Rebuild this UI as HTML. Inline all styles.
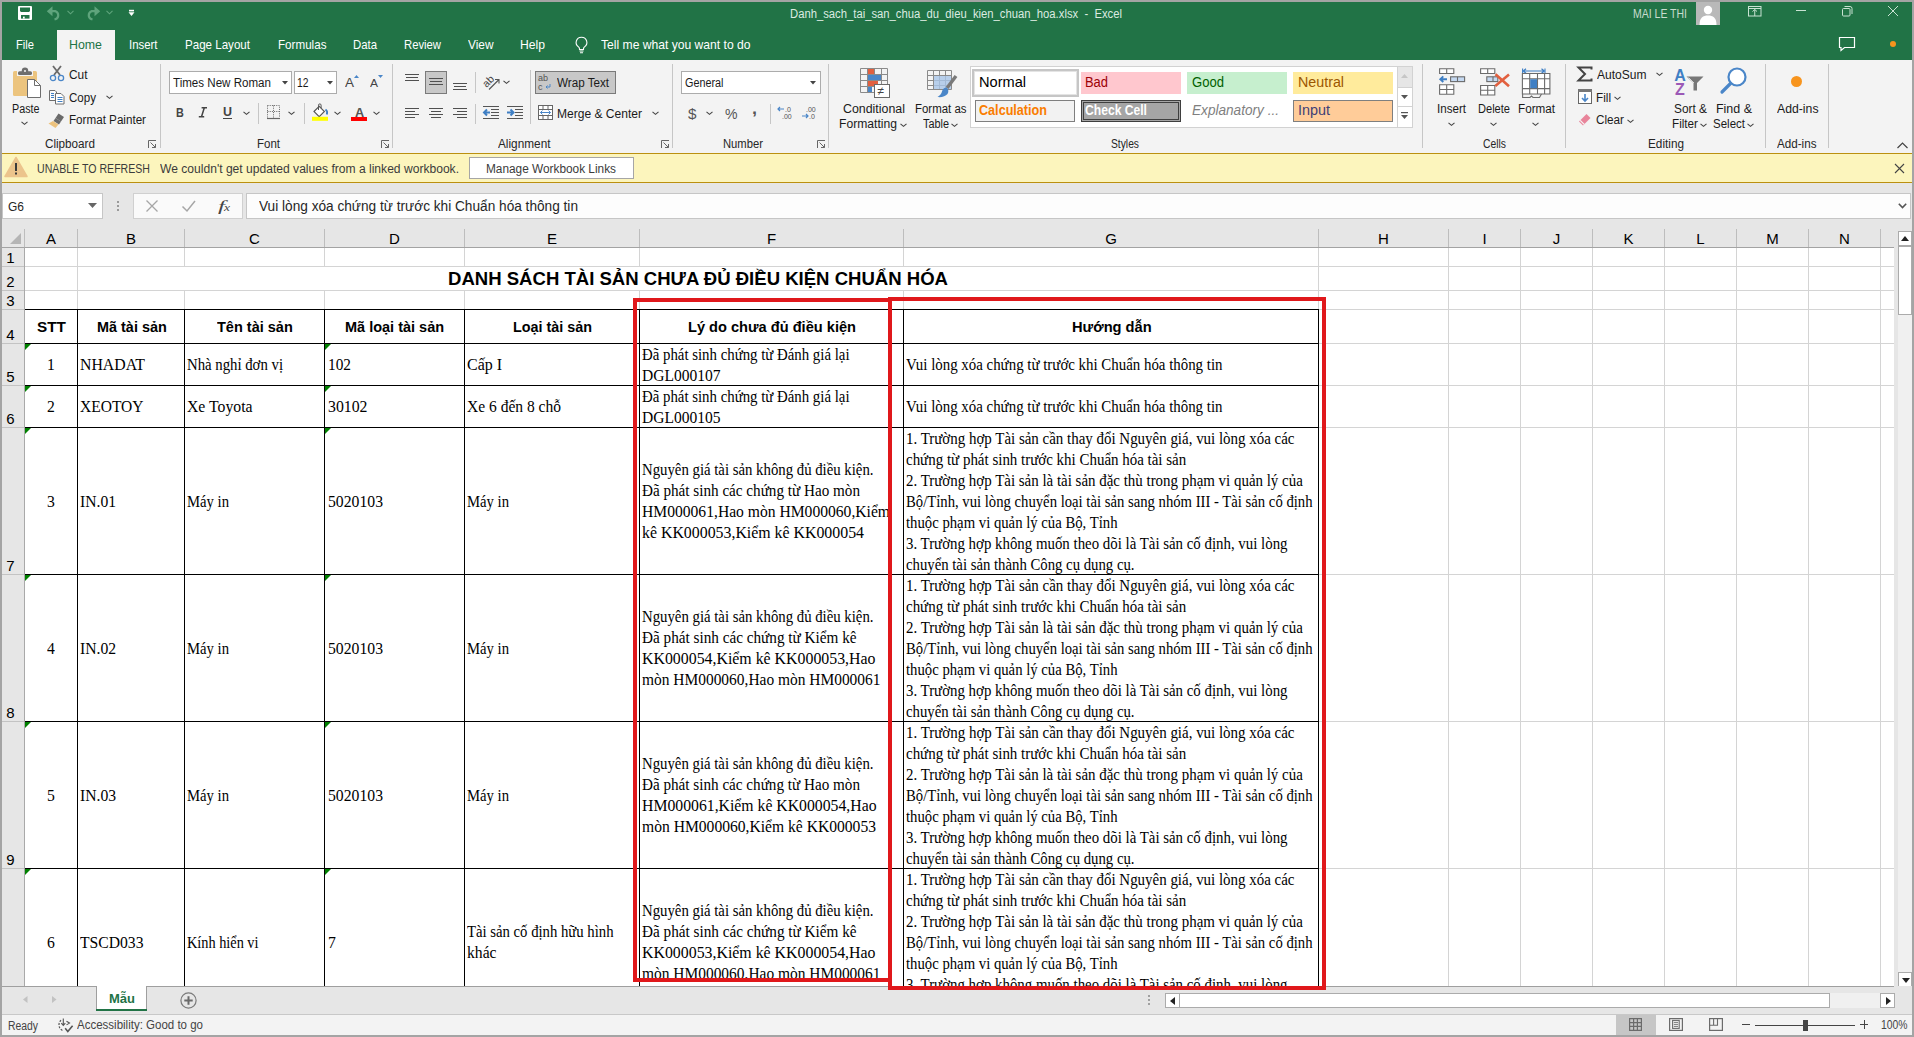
<!DOCTYPE html>
<html><head><meta charset="utf-8"><style>
html,body{margin:0;padding:0;}
body{width:1914px;height:1037px;overflow:hidden;position:relative;background:#a4a4a4;font-family:"Liberation Sans",sans-serif;}
.a{position:absolute;}
.t{white-space:pre;transform-origin:0 0;}
svg.a{overflow:visible;}

</style></head><body>
<div class="a" style="left:2px;top:2px;width:1910px;height:58px;background:#217346;"></div>
<div class="a" style="left:2px;top:60px;width:1910px;height:93px;background:#f3f3f3;"></div>
<div class="a" style="left:57px;top:30px;width:58px;height:30px;background:#f3f3f3;"></div>
<div class="a" style="left:2px;top:153px;width:1910px;height:30px;background:#fcf5bd;"></div>
<div class="a" style="left:2px;top:153px;width:1910px;height:1px;background:#bb9010;"></div>
<div class="a" style="left:2px;top:182px;width:1910px;height:1px;background:#bb9010;"></div>
<div class="a" style="left:2px;top:183px;width:1910px;height:64px;background:#e6e6e6;"></div>
<div class="a" style="left:2px;top:247px;width:1892px;height:739px;background:#ffffff;"></div>
<div class="a" style="left:2px;top:247px;width:22px;height:739px;background:#e6e6e6;"></div>
<div class="a" style="left:1894px;top:229px;width:18px;height:757px;background:#e6e6e6;"></div>
<div class="a" style="left:2px;top:986px;width:1910px;height:28px;background:#e6e6e6;"></div>
<div class="a" style="left:2px;top:1014px;width:1910px;height:21px;background:#f3f3f3;"></div>
<svg class="a" style="left:18px;top:6px;" width="14" height="14" viewBox="0 0 14 14"><rect x="0" y="0" width="14" height="14" rx="1" fill="#fff"/><path d="M2 1.5h10v3.5l-1 1H3l-1-1z" fill="#217346"/><rect x="3" y="9" width="8.5" height="3.6" fill="#217346"/><rect x="5" y="10.6" width="1.7" height="2" fill="#fff"/></svg>
<svg class="a" style="left:46px;top:5px;" width="16" height="15" viewBox="0 0 16 15"><path d="M2 6.2H9.5A4.3 4.3 0 0 1 9.5 14.2H8.5" fill="none" stroke="#5fa47c" stroke-width="2.2"/><path d="M0.8 6.2L6.5 1.2V11.2z" fill="#5fa47c"/></svg>
<svg class="a" style="left:67px;top:10px;" width="7" height="5" viewBox="0 0 7 5"><path d="M0.5 0.8L3.5 3.8 6.5 0.8" fill="none" stroke="#5fa47c" stroke-width="1.1"/></svg>
<svg class="a" style="left:85px;top:5px;" width="16" height="15" viewBox="0 0 16 15"><path d="M14 6.2H6.5A4.3 4.3 0 0 0 6.5 14.2H7.5" fill="none" stroke="#5fa47c" stroke-width="2.2"/><path d="M15.2 6.2L9.5 1.2V11.2z" fill="#5fa47c"/></svg>
<svg class="a" style="left:106px;top:10px;" width="7" height="5" viewBox="0 0 7 5"><path d="M0.5 0.8L3.5 3.8 6.5 0.8" fill="none" stroke="#5fa47c" stroke-width="1.1"/></svg>
<svg class="a" style="left:128px;top:9px;" width="7" height="8" viewBox="0 0 7 8"><rect x="1" y="0.8" width="5" height="1.6" fill="#fff"/><path d="M0.5 3.2h6l-3 3.8z" fill="#fff"/></svg>
<div class="a t" style="left:790.00px;top:8px;font:400 12px/1 'Liberation Sans';color:#dcebe1;transform:scaleX(0.9389);">Danh_sach_tai_san_chua_du_dieu_kien_chuan_hoa.xlsx  -  Excel</div>
<div class="a t" style="left:1633.00px;top:8px;font:400 12px/1 'Liberation Sans';color:#c9ddd0;transform:scaleX(0.8738);">MAI LE THI</div>
<div class="a" style="left:1696px;top:2px;width:24px;height:23px;background:#b9b9b9;"></div>
<svg class="a" style="left:1696px;top:2px;" width="24" height="23" viewBox="0 0 24 23"><circle cx="12" cy="8" r="4.2" fill="#fff"/><path d="M3.5 23 C3.5 15.5 7 13.5 12 13.5 C17 13.5 20.5 15.5 20.5 23 Z" fill="#fff"/></svg>
<svg class="a" style="left:1747px;top:5px;" width="15" height="12" viewBox="0 0 15 12"><rect x="1.5" y="1.5" width="12.5" height="9.5" fill="none" stroke="#c9e3d3" stroke-width="1"/><path d="M1.5 3.5h12.5M7.75 4.5V11M5.5 6.5l2.25-2 2.25 2" fill="none" stroke="#c9e3d3" stroke-width="1"/></svg>
<div class="a" style="left:1796px;top:10px;width:10px;height:1px;background:#c9e3d3;"></div>
<svg class="a" style="left:1841px;top:5px;" width="12" height="12" viewBox="0 0 12 12"><rect x="1.5" y="3.5" width="7.5" height="7.5" rx="1" fill="none" stroke="#c9e3d3"/><path d="M3.5 1.5h5.5a2 2 0 0 1 2 2V9" fill="none" stroke="#c9e3d3"/></svg>
<svg class="a" style="left:1887px;top:5px;" width="12" height="12" viewBox="0 0 12 12"><path d="M1 1l10 10M11 1L1 11" stroke="#c9e3d3" stroke-width="1"/></svg>
<div class="a t" style="left:16.00px;top:38px;font:400 13px/1 'Liberation Sans';color:#ffffff;transform:scaleX(0.8591);">File</div>
<div class="a t" style="left:69.00px;top:38px;font:400 13px/1 'Liberation Sans';color:#217346;transform:scaleX(0.9514);">Home</div>
<div class="a t" style="left:129.00px;top:38px;font:400 13px/1 'Liberation Sans';color:#ffffff;transform:scaleX(0.8765);">Insert</div>
<div class="a t" style="left:185.00px;top:38px;font:400 13px/1 'Liberation Sans';color:#ffffff;transform:scaleX(0.8902);">Page Layout</div>
<div class="a t" style="left:277.50px;top:38px;font:400 13px/1 'Liberation Sans';color:#ffffff;transform:scaleX(0.8950);">Formulas</div>
<div class="a t" style="left:353.00px;top:38px;font:400 13px/1 'Liberation Sans';color:#ffffff;transform:scaleX(0.8737);">Data</div>
<div class="a t" style="left:404.00px;top:38px;font:400 13px/1 'Liberation Sans';color:#ffffff;transform:scaleX(0.8680);">Review</div>
<div class="a t" style="left:467.50px;top:38px;font:400 13px/1 'Liberation Sans';color:#ffffff;transform:scaleX(0.9122);">View</div>
<div class="a t" style="left:520.00px;top:38px;font:400 13px/1 'Liberation Sans';color:#ffffff;transform:scaleX(0.9346);">Help</div>
<svg class="a" style="left:574px;top:36px;" width="15" height="18" viewBox="0 0 15 18"><path d="M7.5 1.2a5.3 5.3 0 0 0-3 9.7c.6.5 1 1.2 1 2V13.5h4v-.6c0-.8.4-1.5 1-2a5.3 5.3 0 0 0-3-9.7z" fill="none" stroke="#fff" stroke-width="1.1"/><path d="M5.5 15h4M6 16.8h3" stroke="#fff" stroke-width="1.1"/></svg>
<div class="a t" style="left:601.00px;top:38px;font:400 13px/1 'Liberation Sans';color:#ffffff;transform:scaleX(0.9319);">Tell me what you want to do</div>
<svg class="a" style="left:1838px;top:36px;" width="18" height="16" viewBox="0 0 18 16"><path d="M1.5 1.5h15v10h-10l-3.5 3v-3h-1.5z" fill="none" stroke="#fff" stroke-width="1.2"/></svg>
<div class="a" style="left:1889.5px;top:40.5px;width:6px;height:6px;border-radius:50%;background:#f7941d"></div>
<div class="a" style="left:160px;top:64px;width:1px;height:84px;background:#c6c6c6;"></div>
<div class="a" style="left:392px;top:64px;width:1px;height:84px;background:#c6c6c6;"></div>
<div class="a" style="left:672px;top:64px;width:1px;height:84px;background:#c6c6c6;"></div>
<div class="a" style="left:828px;top:64px;width:1px;height:84px;background:#c6c6c6;"></div>
<div class="a" style="left:1422px;top:64px;width:1px;height:84px;background:#c6c6c6;"></div>
<div class="a" style="left:1565px;top:64px;width:1px;height:84px;background:#c6c6c6;"></div>
<div class="a" style="left:1765px;top:64px;width:1px;height:84px;background:#c6c6c6;"></div>
<div class="a" style="left:1828px;top:64px;width:1px;height:84px;background:#c6c6c6;"></div>
<svg class="a" style="left:12px;top:67px;" width="31" height="32" viewBox="0 0 31 32"><rect x="1" y="4" width="24" height="25" rx="1.5" fill="#ecc47e"/><path d="M5 2.2h16v6.8H5z" fill="#f3f3f3"/><rect x="6" y="4.2" width="14" height="3.8" rx="1.6" fill="#6e6e6e"/><path d="M9.8 5V3.6a3.2 3.2 0 0 1 6.4 0V5z" fill="#6e6e6e"/><circle cx="13" cy="3.9" r="1" fill="#f3f3f3"/><path d="M15.5 12.5h7l6 6V30.5h-13z" fill="#fff" stroke="#6e6e6e" stroke-width="1"/><path d="M22.5 12.5v6h6" fill="none" stroke="#6e6e6e" stroke-width="1"/></svg>
<div class="a t" style="left:11.50px;top:103px;font:400 12px/1 'Liberation Sans';color:#1a1a1a;transform:scaleX(0.8961);">Paste</div>
<svg class="a" style="left:21px;top:121px;" width="7" height="5" viewBox="0 0 7 5"><path d="M0.5 0.8L3.5 3.3L6.5 0.8" fill="none" stroke="#444" stroke-width="1.1"/></svg>
<svg class="a" style="left:49px;top:65px;" width="17" height="17" viewBox="0 0 17 17"><path d="M4 1L11 10M12 1L5 10" stroke="#6a6a6a" stroke-width="1.8"/><circle cx="4" cy="13" r="2.6" fill="none" stroke="#4a86c8" stroke-width="1.3"/><circle cx="12" cy="13" r="2.6" fill="none" stroke="#4a86c8" stroke-width="1.3"/></svg>
<div class="a t" style="left:68.50px;top:69px;font:400 12px/1 'Liberation Sans';color:#1a1a1a;transform:scaleX(0.9900);">Cut</div>
<svg class="a" style="left:48px;top:89px;" width="18" height="16" viewBox="0 0 18 16"><path d="M1.5 1.5h5.5l1.5 1.5v3M1.5 1.5v10h5.5" fill="#fff" stroke="#6e6e6e" stroke-width="1"/><path d="M3 4.5h3M3 6.5h3M3 8.5h3" stroke="#3f7fc4" stroke-width="1"/><path d="M7.5 4.5h5.5l3 3v7.5h-8.5z" fill="#fff" stroke="#6e6e6e" stroke-width="1"/><path d="M9.5 8.5h5M9.5 10.5h5M9.5 12.5h5" stroke="#3f7fc4" stroke-width="1"/></svg>
<div class="a t" style="left:68.50px;top:92px;font:400 12px/1 'Liberation Sans';color:#1a1a1a;transform:scaleX(0.9637);">Copy</div>
<svg class="a" style="left:106px;top:95px;" width="7" height="5" viewBox="0 0 7 5"><path d="M0.5 0.8L3.5 3.3L6.5 0.8" fill="none" stroke="#444" stroke-width="1.1"/></svg>
<svg class="a" style="left:48px;top:112px;" width="18" height="16" viewBox="0 0 18 16"><path d="M10.5 1.5l5.5 3.5-3 4.5-5.5-3.5z" fill="#6a6a6a"/><path d="M7.5 6l5.5 3.5-2 3-5.5-3.5z" fill="#6a6a6a"/><path d="M5 9l5.5 3.5-3 3.5-7-4.5z" fill="#ecc27d"/></svg>
<div class="a t" style="left:68.50px;top:114px;font:400 12px/1 'Liberation Sans';color:#1a1a1a;transform:scaleX(0.9703);">Format Painter</div>
<div class="a t" style="left:44.50px;top:138px;font:400 12px/1 'Liberation Sans';color:#262626;transform:scaleX(0.9732);">Clipboard</div>
<svg class="a" style="left:148px;top:140px;" width="9" height="9" viewBox="0 0 9 9"><path d="M0.5 8V0.5H8" fill="none" stroke="#666" stroke-width="1"/><path d="M2.5 2.5L7.5 7.5M7.5 4v3.5H4" fill="none" stroke="#666" stroke-width="1"/></svg>
<div class="a" style="left:169px;top:71px;width:123px;height:23px;background:#fff;box-sizing:border-box;border:1px solid #acacac;"></div>
<div class="a t" style="left:172.50px;top:77px;font:400 12px/1 'Liberation Sans';color:#1a1a1a;transform:scaleX(0.9648);">Times New Roman</div>
<svg class="a" style="left:282px;top:81px;" width="6" height="4" viewBox="0 0 6 4"><path d="M0 0h6l-3 3.5z" fill="#444"/></svg>
<div class="a" style="left:294px;top:71px;width:43px;height:23px;background:#fff;box-sizing:border-box;border:1px solid #acacac;"></div>
<div class="a t" style="left:297.00px;top:77px;font:400 12px/1 'Liberation Sans';color:#1a1a1a;transform:scaleX(0.8608);">12</div>
<svg class="a" style="left:327px;top:81px;" width="6" height="4" viewBox="0 0 6 4"><path d="M0 0h6l-3 3.5z" fill="#444"/></svg>
<div class="a t" style="left:345.00px;top:76px;font:400 13px/1 'Liberation Sans';color:#444;transform:scaleX(1.0378);">A</div>
<svg class="a" style="left:354px;top:75px;" width="5" height="3" viewBox="0 0 5 3"><path d="M0 3L2.5 0 5 3z" fill="#4a86c8"/></svg>
<div class="a t" style="left:370.00px;top:78px;font:400 11px/1 'Liberation Sans';color:#444;transform:scaleX(1.0894);">A</div>
<svg class="a" style="left:378px;top:75px;" width="5" height="3" viewBox="0 0 5 3"><path d="M0 0h5L2.5 3z" fill="#4a86c8"/></svg>
<div class="a t" style="left:175.50px;top:107px;font:700 12px/1 'Liberation Sans';color:#444;transform:scaleX(0.8995);">B</div>
<svg class="a" style="left:198px;top:107px;" width="10" height="11" viewBox="0 0 10 11"><path d="M3.6 0.8h5.4M0.8 9.8h5.4M6.3 0.8L3.5 9.8" fill="none" stroke="#444" stroke-width="1.5"/></svg>
<div class="a t" style="left:222.70px;top:106px;font:700 12px/1 'Liberation Sans';color:#444;transform:scaleX(1.0378);">U</div>
<div class="a" style="left:222.5px;top:118px;width:9.5px;height:1px;background:#444;"></div>
<svg class="a" style="left:242.5px;top:111px;" width="7" height="5" viewBox="0 0 7 5"><path d="M0.5 0.8L3.5 3.3L6.5 0.8" fill="none" stroke="#444" stroke-width="1.1"/></svg>
<div class="a" style="left:258px;top:103px;width:1px;height:21px;background:#c6c6c6;"></div>
<svg class="a" style="left:266px;top:104px;" width="16" height="16" viewBox="0 0 16 16"><path d="M1.5 1.5h12v12M1.5 1.5v12M7.5 1.5v12M1.5 7.5h12" fill="none" stroke="#666" stroke-width="1" stroke-dasharray="1 1.2"/><path d="M1 14.5h13" stroke="#666" stroke-width="1.2"/></svg>
<svg class="a" style="left:288px;top:111px;" width="7" height="5" viewBox="0 0 7 5"><path d="M0.5 0.8L3.5 3.3L6.5 0.8" fill="none" stroke="#444" stroke-width="1.1"/></svg>
<div class="a" style="left:304px;top:103px;width:1px;height:21px;background:#c6c6c6;"></div>
<svg class="a" style="left:311px;top:104px;" width="18" height="17" viewBox="0 0 18 17"><path d="M3 7.5L8.2 2.3 13.4 7.5 8.2 12.7z" fill="#fff" stroke="#555" stroke-width="1.1"/><path d="M7.5 6V1.2a1.3 1.3 0 0 1 2.6 0V4" fill="none" stroke="#555" stroke-width="1"/><path d="M14.5 5.5c1.5 1 2 3 1.3 5" fill="none" stroke="#3f7fc4" stroke-width="1.8"/><rect x="1" y="12.8" width="16" height="4" fill="#ffff00"/></svg>
<svg class="a" style="left:334px;top:111px;" width="7" height="5" viewBox="0 0 7 5"><path d="M0.5 0.8L3.5 3.3L6.5 0.8" fill="none" stroke="#444" stroke-width="1.1"/></svg>
<div class="a t" style="left:354.80px;top:106px;font:700 13px/1 'Liberation Sans';color:#555;transform:scaleX(0.9797);">A</div>
<div class="a" style="left:351px;top:117px;width:16px;height:4px;background:#ff0000;"></div>
<svg class="a" style="left:373px;top:111px;" width="7" height="5" viewBox="0 0 7 5"><path d="M0.5 0.8L3.5 3.3L6.5 0.8" fill="none" stroke="#444" stroke-width="1.1"/></svg>
<div class="a t" style="left:256.50px;top:138px;font:400 12px/1 'Liberation Sans';color:#262626;transform:scaleX(0.9577);">Font</div>
<svg class="a" style="left:381px;top:140px;" width="9" height="9" viewBox="0 0 9 9"><path d="M0.5 8V0.5H8" fill="none" stroke="#666" stroke-width="1"/><path d="M2.5 2.5L7.5 7.5M7.5 4v3.5H4" fill="none" stroke="#666" stroke-width="1"/></svg>
<div class="a" style="left:405px;top:74px;width:14px;height:1px;background:#505050;"></div>
<div class="a" style="left:406px;top:77px;width:12px;height:1px;background:#505050;"></div>
<div class="a" style="left:405px;top:80px;width:14px;height:1px;background:#505050;"></div>
<div class="a" style="left:425px;top:71px;width:22px;height:23px;background:#c8c8c8;box-sizing:border-box;border:1px solid #7a7a7a;"></div>
<div class="a" style="left:429px;top:78px;width:14px;height:1px;background:#505050;"></div>
<div class="a" style="left:430px;top:81px;width:12px;height:1px;background:#505050;"></div>
<div class="a" style="left:429px;top:84px;width:14px;height:1px;background:#505050;"></div>
<div class="a" style="left:453px;top:83px;width:14px;height:1px;background:#505050;"></div>
<div class="a" style="left:454px;top:86px;width:12px;height:1px;background:#505050;"></div>
<div class="a" style="left:453px;top:89px;width:14px;height:1px;background:#505050;"></div>
<div class="a" style="left:475px;top:72px;width:1px;height:21px;background:#c6c6c6;"></div>
<svg class="a" style="left:482px;top:74px;" width="18" height="16" viewBox="0 0 18 16"><text x="0" y="0" font-size="10.5" font-family="Liberation Sans" fill="#444" transform="translate(4.5 14) rotate(-45)">ab</text><path d="M7 15.5L16.5 6M13 5.5h4v4" fill="none" stroke="#555" stroke-width="1.1"/></svg>
<svg class="a" style="left:503px;top:80px;" width="7" height="5" viewBox="0 0 7 5"><path d="M0.5 0.8L3.5 3.3L6.5 0.8" fill="none" stroke="#444" stroke-width="1.1"/></svg>
<div class="a" style="left:530px;top:70px;width:1px;height:54px;background:#c6c6c6;"></div>
<div class="a" style="left:535px;top:71px;width:81px;height:23px;background:#c8c8c8;box-sizing:border-box;border:1px solid #7a7a7a;"></div>
<svg class="a" style="left:538px;top:73px;" width="16" height="19" viewBox="0 0 16 19"><text x="0" y="8" font-size="9" font-family="Liberation Sans" fill="#555">ab</text><text x="0" y="17" font-size="9" font-family="Liberation Sans" fill="#555">c</text><path d="M12 11v3h-4M9.5 12.5L8 14l1.5 1.5" fill="none" stroke="#4a86c8" stroke-width="1"/></svg>
<div class="a t" style="left:557.00px;top:77px;font:400 12px/1 'Liberation Sans';color:#1a1a1a;transform:scaleX(0.9705);">Wrap Text</div>
<div class="a" style="left:405px;top:108px;width:14px;height:1px;background:#505050;"></div>
<div class="a" style="left:429px;top:108px;width:14px;height:1px;background:#505050;"></div>
<div class="a" style="left:453px;top:108px;width:14px;height:1px;background:#505050;"></div>
<div class="a" style="left:405px;top:111px;width:10px;height:1px;background:#505050;"></div>
<div class="a" style="left:431px;top:111px;width:10px;height:1px;background:#505050;"></div>
<div class="a" style="left:457px;top:111px;width:10px;height:1px;background:#505050;"></div>
<div class="a" style="left:405px;top:114px;width:14px;height:1px;background:#505050;"></div>
<div class="a" style="left:429px;top:114px;width:14px;height:1px;background:#505050;"></div>
<div class="a" style="left:453px;top:114px;width:14px;height:1px;background:#505050;"></div>
<div class="a" style="left:405px;top:117px;width:10px;height:1px;background:#505050;"></div>
<div class="a" style="left:431px;top:117px;width:10px;height:1px;background:#505050;"></div>
<div class="a" style="left:457px;top:117px;width:10px;height:1px;background:#505050;"></div>
<div class="a" style="left:475px;top:104px;width:1px;height:20px;background:#c6c6c6;"></div>
<svg class="a" style="left:483px;top:105px;" width="17" height="14" viewBox="0 0 17 14"><path d="M0 1.5h16M8 4.5h8M8 7.5h8M8 10.5h8M0 13.5h16" stroke="#555" stroke-width="1"/><path d="M1 7.5h6M4 4.5L1 7.5 4 10.5" fill="none" stroke="#3f7fc4" stroke-width="2"/></svg>
<svg class="a" style="left:507px;top:105px;" width="17" height="14" viewBox="0 0 17 14"><path d="M0 1.5h16M8 4.5h8M8 7.5h8M8 10.5h8M0 13.5h16" stroke="#555" stroke-width="1"/><path d="M0 7.5h6M3.5 4.5L6.5 7.5 3.5 10.5" fill="none" stroke="#3f7fc4" stroke-width="2"/></svg>
<svg class="a" style="left:537px;top:104px;" width="17" height="17" viewBox="0 0 17 17"><rect x="1.5" y="1.5" width="14" height="14" fill="#fff" stroke="#666"/><path d="M1.5 5.5h14M1.5 11.5h14M6 1.5v4M11 1.5v4M6 11.5v4M11 11.5v4" stroke="#666"/><path d="M3.5 8.5h10M5.5 6.5l-2 2 2 2M11.5 6.5l2 2-2 2" fill="none" stroke="#4a86c8" stroke-width="1"/></svg>
<div class="a t" style="left:557.00px;top:108px;font:400 12px/1 'Liberation Sans';color:#1a1a1a;transform:scaleX(1.0035);">Merge &amp; Center</div>
<svg class="a" style="left:652px;top:111px;" width="7" height="5" viewBox="0 0 7 5"><path d="M0.5 0.8L3.5 3.3L6.5 0.8" fill="none" stroke="#444" stroke-width="1.1"/></svg>
<div class="a t" style="left:498.00px;top:138px;font:400 12px/1 'Liberation Sans';color:#262626;transform:scaleX(0.9836);">Alignment</div>
<svg class="a" style="left:661px;top:140px;" width="9" height="9" viewBox="0 0 9 9"><path d="M0.5 8V0.5H8" fill="none" stroke="#666" stroke-width="1"/><path d="M2.5 2.5L7.5 7.5M7.5 4v3.5H4" fill="none" stroke="#666" stroke-width="1"/></svg>
<div class="a" style="left:681px;top:71px;width:140px;height:23px;background:#fff;box-sizing:border-box;border:1px solid #acacac;"></div>
<div class="a t" style="left:685.00px;top:77px;font:400 12px/1 'Liberation Sans';color:#1a1a1a;transform:scaleX(0.9016);">General</div>
<svg class="a" style="left:810px;top:81px;" width="6" height="4" viewBox="0 0 6 4"><path d="M0 0h6l-3 3.5z" fill="#444"/></svg>
<div class="a t" style="left:688.00px;top:106px;font:400 15px/1 'Liberation Sans';color:#555;transform:scaleX(1.0187);">$</div>
<svg class="a" style="left:706px;top:111px;" width="7" height="5" viewBox="0 0 7 5"><path d="M0.5 0.8L3.5 3.3L6.5 0.8" fill="none" stroke="#444" stroke-width="1.1"/></svg>
<div class="a t" style="left:725.00px;top:107px;font:400 14px/1 'Liberation Sans';color:#555;transform:scaleX(1.0038);">%</div>
<div class="a t" style="left:752.00px;top:101px;font:700 16px/1 'Liberation Sans';color:#555;transform:scaleX(1.1228);">,</div>
<div class="a" style="left:770px;top:104px;width:1px;height:20px;background:#c6c6c6;"></div>
<svg class="a" style="left:777px;top:105px;" width="17" height="15" viewBox="0 0 17 15"><path d="M1 4h6M3 2L1 4l2 2" fill="none" stroke="#4a86c8" stroke-width="1.2"/><text x="8" y="6.5" font-size="7" font-family="Liberation Sans" fill="#555">.0</text><text x="5" y="14" font-size="7" font-family="Liberation Sans" fill="#555">.00</text></svg>
<svg class="a" style="left:801px;top:105px;" width="17" height="15" viewBox="0 0 17 15"><text x="5" y="6.5" font-size="7" font-family="Liberation Sans" fill="#555">.00</text><path d="M1 11h6M5 9l2 2-2 2" fill="none" stroke="#4a86c8" stroke-width="1.2"/><text x="8" y="14" font-size="7" font-family="Liberation Sans" fill="#555">.0</text></svg>
<div class="a t" style="left:722.50px;top:138px;font:400 12px/1 'Liberation Sans';color:#262626;transform:scaleX(0.9370);">Number</div>
<svg class="a" style="left:817px;top:140px;" width="9" height="9" viewBox="0 0 9 9"><path d="M0.5 8V0.5H8" fill="none" stroke="#666" stroke-width="1"/><path d="M2.5 2.5L7.5 7.5M7.5 4v3.5H4" fill="none" stroke="#666" stroke-width="1"/></svg>
<svg class="a" style="left:859px;top:67px;" width="33" height="32" viewBox="0 0 33 32"><path d="M1.5 1.5h27v24h-27zM1.5 7.5h27M1.5 13.5h27M1.5 19.5h27M8.5 1.5v24M15.5 1.5v24M22.5 1.5v24" fill="none" stroke="#8a8a8a" stroke-width="1"/><rect x="9" y="2" width="6" height="5" fill="#e2603f"/><rect x="9" y="8" width="13" height="5" fill="#4a86c8"/><rect x="9" y="14" width="10" height="5" fill="#e2603f"/><rect x="9" y="20" width="4" height="5" fill="#4a86c8"/><rect x="15.5" y="17.5" width="15" height="13" fill="#fff" stroke="#6a6a6a"/><text x="18.5" y="28" font-size="12" font-family="Liberation Sans" fill="#444">≠</text></svg>
<div class="a t" style="left:843.00px;top:103px;font:400 12px/1 'Liberation Sans';color:#1a1a1a;transform:scaleX(1.0325);">Conditional</div>
<div class="a t" style="left:839.00px;top:118px;font:400 12px/1 'Liberation Sans';color:#1a1a1a;transform:scaleX(1.0112);">Formatting</div>
<svg class="a" style="left:900px;top:123px;" width="7" height="5" viewBox="0 0 7 5"><path d="M0.5 0.8L3.5 3.3L6.5 0.8" fill="none" stroke="#444" stroke-width="1.1"/></svg>
<svg class="a" style="left:926px;top:69px;" width="32" height="30" viewBox="0 0 32 30"><path d="M1.5 1.5h24v19h-24zM1.5 6.5h24M1.5 11.5h24M1.5 16.5h24M7.5 1.5v19M13.5 1.5v19M19.5 1.5v19" fill="none" stroke="#8a8a8a"/><rect x="8" y="7" width="17" height="13" fill="#a9c6e8" opacity="0.8"/><path d="M30 7L21 19" stroke="#7a7a7a" stroke-width="3.5"/><path d="M20.5 18.5c-2 0-4 1.5-4.5 4-0.5 2-2 4-4.5 5.5 4 0.5 8-0.5 10-3 1.5-2 1-5-1-6.5z" fill="#4a86c8"/></svg>
<div class="a t" style="left:914.50px;top:103px;font:400 12px/1 'Liberation Sans';color:#1a1a1a;transform:scaleX(0.9534);">Format as</div>
<div class="a t" style="left:922.50px;top:118px;font:400 12px/1 'Liberation Sans';color:#1a1a1a;transform:scaleX(0.9063);">Table</div>
<svg class="a" style="left:951px;top:123px;" width="7" height="5" viewBox="0 0 7 5"><path d="M0.5 0.8L3.5 3.3L6.5 0.8" fill="none" stroke="#444" stroke-width="1.1"/></svg>
<div class="a" style="left:970px;top:66px;width:443px;height:62px;background:#fff;box-sizing:border-box;border:1px solid #d2d2d2;"></div>
<div class="a" style="left:972px;top:69px;width:107px;height:28px;background:#fff;box-sizing:border-box;border:2px solid #c6c6c6;"></div>
<div class="a" style="left:974px;top:71px;width:103px;height:24px;background:#fff;box-sizing:border-box;border:1px solid #e4e4e4;"></div>
<div class="a t" style="left:979.00px;top:74px;font:400 15px/1 'Liberation Sans';color:#000;transform:scaleX(0.9722);">Normal</div>
<div class="a" style="left:1081px;top:72px;width:100px;height:22px;background:#ffc7ce;"></div>
<div class="a t" style="left:1085.00px;top:75px;font:400 14px/1 'Liberation Sans';color:#9c0006;transform:scaleX(0.9229);">Bad</div>
<div class="a" style="left:1187px;top:72px;width:100px;height:22px;background:#c6efce;"></div>
<div class="a t" style="left:1191.50px;top:75px;font:400 14px/1 'Liberation Sans';color:#006100;transform:scaleX(0.9343);">Good</div>
<div class="a" style="left:1293px;top:72px;width:100px;height:22px;background:#ffeb9c;"></div>
<div class="a t" style="left:1297.50px;top:75px;font:400 14px/1 'Liberation Sans';color:#9c5700;transform:scaleX(1.0190);">Neutral</div>
<div class="a" style="left:975px;top:100px;width:100px;height:22px;background:#f2f2f2;box-sizing:border-box;border:1px solid #7f7f7f;"></div>
<div class="a t" style="left:979.00px;top:103px;font:700 14px/1 'Liberation Sans';color:#fa7d00;transform:scaleX(0.9010);">Calculation</div>
<div class="a" style="left:1081px;top:100px;width:100px;height:22px;background:#a5a5a5;box-sizing:border-box;border:1px solid #3f3f3f;"></div>
<div class="a" style="left:1083px;top:102px;width:96px;height:18px;box-sizing:border-box;border:1px solid #3f3f3f;"></div>
<div class="a t" style="left:1085.00px;top:103px;font:700 14px/1 'Liberation Sans';color:#ffffff;transform:scaleX(0.8660);">Check Cell</div>
<div class="a t" style="left:1191.50px;top:103px;font:italic 400 14px/1 'Liberation Sans';color:#7f7f7f;transform:scaleX(0.9721);">Explanatory ...</div>
<div class="a" style="left:1293px;top:100px;width:100px;height:22px;background:#ffcc99;box-sizing:border-box;border:1px solid #7f7f7f;"></div>
<div class="a t" style="left:1297.50px;top:103px;font:400 14px/1 'Liberation Sans';color:#3f3f76;transform:scaleX(1.0276);">Input</div>
<div class="a" style="left:1397px;top:66px;width:16px;height:62px;background:#fff;box-sizing:border-box;border:1px solid #d2d2d2;"></div>
<div class="a" style="left:1398px;top:67px;width:14px;height:20px;background:#e6e6e6;"></div>
<svg class="a" style="left:1401px;top:74px;" width="7" height="4" viewBox="0 0 7 4"><path d="M0 4L3.5 0 7 4z" fill="#c6c6c6"/></svg>
<div class="a" style="left:1397px;top:87px;width:16px;height:1px;background:#d2d2d2;"></div>
<div class="a" style="left:1397px;top:106px;width:16px;height:1px;background:#d2d2d2;"></div>
<svg class="a" style="left:1401px;top:95px;" width="7" height="4" viewBox="0 0 7 4"><path d="M0 0h7L3.5 4z" fill="#555"/></svg>
<svg class="a" style="left:1401px;top:112px;" width="7" height="8" viewBox="0 0 7 8"><rect x="0" y="0" width="7" height="1.2" fill="#555"/><path d="M0 3h7L3.5 7z" fill="#555"/></svg>
<div class="a t" style="left:1111.00px;top:138px;font:400 12px/1 'Liberation Sans';color:#262626;transform:scaleX(0.8566);">Styles</div>
<svg class="a" style="left:1430px;top:62px;" width="40" height="38" viewBox="0 0 40 38"><path d="M9.6 6.7h14.2v4.8H9.6zM16.7 6.7v4.8" fill="#fff" stroke="#6b6b6b" stroke-width="1.1"/><rect x="20.6" y="14.8" width="14" height="4.8" fill="#c5d9f1" stroke="#6b6b6b" stroke-width="1.1"/><path d="M27.5 14.8v4.8" stroke="#6b6b6b" stroke-width="1.1"/><path d="M10.5 17.2h6.5M13.3 14.4L10.3 17.2 13.3 20" fill="none" stroke="#3f7fc4" stroke-width="1.9"/><path d="M9.6 22.8h14.2v9.5H9.6zM9.6 27.5h14.2M16.7 22.8v9.5" fill="#fff" stroke="#6b6b6b" stroke-width="1.1"/></svg>
<div class="a t" style="left:1437.00px;top:103px;font:400 12px/1 'Liberation Sans';color:#1a1a1a;transform:scaleX(0.9662);">Insert</div>
<svg class="a" style="left:1448px;top:122px;" width="7" height="5" viewBox="0 0 7 5"><path d="M0.5 0.8L3.5 3.3L6.5 0.8" fill="none" stroke="#444" stroke-width="1.1"/></svg>
<svg class="a" style="left:1470px;top:62px;" width="42" height="38" viewBox="0 0 42 38"><path d="M10.6 6.7h14.2v4.8H10.6zM17.7 6.7v4.8" fill="#fff" stroke="#6b6b6b" stroke-width="1.1"/><rect x="16.8" y="14.8" width="11" height="4.8" fill="#c5d9f1" stroke="#6b6b6b" stroke-width="1.1"/><path d="M23 14.8v4.8" stroke="#6b6b6b" stroke-width="1.1"/><path d="M10.6 23.5h14.2v9.5H10.6zM10.6 28.2h14.2M17.7 23.5v9.5" fill="#fff" stroke="#6b6b6b" stroke-width="1.1"/><path d="M25.5 12.2L39 24.3M39 12.5L25.3 24" stroke="#e2603f" stroke-width="2.6"/></svg>
<div class="a t" style="left:1477.50px;top:103px;font:400 12px/1 'Liberation Sans';color:#1a1a1a;transform:scaleX(0.9225);">Delete</div>
<svg class="a" style="left:1490px;top:122px;" width="7" height="5" viewBox="0 0 7 5"><path d="M0.5 0.8L3.5 3.3L6.5 0.8" fill="none" stroke="#444" stroke-width="1.1"/></svg>
<svg class="a" style="left:1520px;top:62px;" width="34" height="38" viewBox="0 0 34 38"><path d="M2.6 6.5v5M25 6.5v5" stroke="#3f7fc4" stroke-width="1.1"/><path d="M3 9h21.5M6 6.8L3.2 9 6 11.2M21.5 6.8L24.3 9 21.5 11.2" fill="none" stroke="#3f7fc4" stroke-width="1.2"/><path d="M2.4 11.5h27.5v20.5H2.4zM2.4 16.7h27.5M2.4 26.6h27.5M9.7 11.5v20.5M17.5 11.5v20.5M24.6 11.5v20.5" fill="#fff" stroke="#6b6b6b" stroke-width="1.1"/><rect x="10.2" y="17.2" width="6.8" height="9" fill="#3f7fc4"/><path d="M2.6 32v3.5h7.4l1.5-1.5 1.5 1.5h6.5l2-3.5" fill="none" stroke="#6b6b6b" stroke-width="1.1"/></svg>
<div class="a t" style="left:1517.50px;top:103px;font:400 12px/1 'Liberation Sans';color:#1a1a1a;transform:scaleX(0.9733);">Format</div>
<svg class="a" style="left:1532px;top:122px;" width="7" height="5" viewBox="0 0 7 5"><path d="M0.5 0.8L3.5 3.3L6.5 0.8" fill="none" stroke="#444" stroke-width="1.1"/></svg>
<div class="a t" style="left:1482.50px;top:138px;font:400 12px/1 'Liberation Sans';color:#262626;transform:scaleX(0.8623);">Cells</div>
<svg class="a" style="left:1577px;top:66px;" width="16" height="16" viewBox="0 0 16 16"><path d="M14.5 3.5V1.5H1.5l6.5 6.5-6.5 6.5h13v-2" fill="none" stroke="#444" stroke-width="2"/></svg>
<div class="a t" style="left:1596.50px;top:69px;font:400 12px/1 'Liberation Sans';color:#1a1a1a;transform:scaleX(1.0028);">AutoSum</div>
<svg class="a" style="left:1656px;top:72px;" width="7" height="5" viewBox="0 0 7 5"><path d="M0.5 0.8L3.5 3.3L6.5 0.8" fill="none" stroke="#444" stroke-width="1.1"/></svg>
<svg class="a" style="left:1577px;top:88px;" width="16" height="17" viewBox="0 0 16 17"><rect x="1.5" y="1.5" width="13" height="14" fill="#fff" stroke="#666"/><rect x="1" y="1" width="14" height="3" fill="#777"/><path d="M8 6v7M5 10l3 3 3-3" fill="none" stroke="#4a86c8" stroke-width="1.6"/></svg>
<div class="a t" style="left:1596.00px;top:92px;font:400 12px/1 'Liberation Sans';color:#1a1a1a;transform:scaleX(0.9786);">Fill</div>
<svg class="a" style="left:1614px;top:96px;" width="7" height="5" viewBox="0 0 7 5"><path d="M0.5 0.8L3.5 3.3L6.5 0.8" fill="none" stroke="#444" stroke-width="1.1"/></svg>
<svg class="a" style="left:1577px;top:111px;" width="15" height="15" viewBox="0 0 15 15"><path d="M2 10.5L9.5 3 13.5 7 6 14.5z" fill="#e8849a"/><path d="M3.2 9.3L7.2 13.3" stroke="#f6f6f6" stroke-width="1.2"/></svg>
<div class="a t" style="left:1596.00px;top:114px;font:400 12px/1 'Liberation Sans';color:#1a1a1a;transform:scaleX(0.9760);">Clear</div>
<svg class="a" style="left:1627px;top:119px;" width="7" height="5" viewBox="0 0 7 5"><path d="M0.5 0.8L3.5 3.3L6.5 0.8" fill="none" stroke="#444" stroke-width="1.1"/></svg>
<svg class="a" style="left:1674px;top:67px;" width="31" height="30" viewBox="0 0 31 30"><text x="0.3" y="14" font-size="16" font-weight="700" font-family="Liberation Sans" fill="#3f7fc4">A</text><text x="1" y="28" font-size="16" font-weight="700" font-family="Liberation Sans" fill="#9b59b6">Z</text><path d="M12.5 9.5h17l-6.5 6.5v7.5h-3.5v-7.5z" fill="#777"/><path d="M14.5 10.5l5.5 5.5" stroke="#f3f3f3" stroke-width="0.8"/></svg>
<div class="a t" style="left:1673.50px;top:103px;font:400 12px/1 'Liberation Sans';color:#1a1a1a;transform:scaleX(0.9892);">Sort &amp;</div>
<div class="a t" style="left:1671.50px;top:118px;font:400 12px/1 'Liberation Sans';color:#1a1a1a;transform:scaleX(0.9748);">Filter</div>
<svg class="a" style="left:1700px;top:123px;" width="7" height="5" viewBox="0 0 7 5"><path d="M0.5 0.8L3.5 3.3L6.5 0.8" fill="none" stroke="#444" stroke-width="1.1"/></svg>
<svg class="a" style="left:1719px;top:66px;" width="30" height="30" viewBox="0 0 30 30"><circle cx="18" cy="11" r="8.5" fill="#fff" stroke="#4a86c8" stroke-width="2.2"/><path d="M11.5 17.5L3 26" stroke="#4a86c8" stroke-width="3.2" stroke-linecap="round"/></svg>
<div class="a t" style="left:1716.00px;top:103px;font:400 12px/1 'Liberation Sans';color:#1a1a1a;transform:scaleX(1.0378);">Find &amp;</div>
<div class="a t" style="left:1713.00px;top:118px;font:400 12px/1 'Liberation Sans';color:#1a1a1a;transform:scaleX(0.9593);">Select</div>
<svg class="a" style="left:1747px;top:123px;" width="7" height="5" viewBox="0 0 7 5"><path d="M0.5 0.8L3.5 3.3L6.5 0.8" fill="none" stroke="#444" stroke-width="1.1"/></svg>
<div class="a t" style="left:1647.50px;top:138px;font:400 12px/1 'Liberation Sans';color:#262626;transform:scaleX(0.9808);">Editing</div>
<div class="a" style="left:1790.5px;top:75.5px;width:11px;height:11px;border-radius:50%;background:#f7941d"></div>
<div class="a t" style="left:1776.50px;top:103px;font:400 12px/1 'Liberation Sans';color:#1a1a1a;transform:scaleX(1.0200);">Add-ins</div>
<div class="a t" style="left:1777.00px;top:138px;font:400 12px/1 'Liberation Sans';color:#262626;transform:scaleX(0.9708);">Add-ins</div>
<svg class="a" style="left:1897px;top:142px;" width="11" height="7" viewBox="0 0 11 7"><path d="M0.5 6L5.5 1l5 5" fill="none" stroke="#444" stroke-width="1.2"/></svg>
<svg class="a" style="left:4px;top:156px;" width="24" height="22" viewBox="0 0 24 22"><path d="M12 1.5L23 20.5H1z" fill="#ecc48c" stroke="#ecc48c" stroke-width="1.5" stroke-linejoin="round"/><rect x="11" y="7" width="2" height="8" fill="#3a3a3a"/><rect x="11" y="16.5" width="2" height="2" fill="#3a3a3a"/></svg>
<div class="a t" style="left:36.50px;top:163px;font:400 12px/1 'Liberation Sans';color:#3b3b3b;transform:scaleX(0.8810);">UNABLE TO REFRESH</div>
<div class="a t" style="left:160.00px;top:163px;font:400 12px/1 'Liberation Sans';color:#3b3b3b;transform:scaleX(1.0071);">We couldn&#x27;t get updated values from a linked workbook.</div>
<div class="a" style="left:469px;top:157px;width:165px;height:22px;background:#ffffff;box-sizing:border-box;border:1px solid #a6a6a6;"></div>
<div class="a t" style="left:485.50px;top:163px;font:400 12px/1 'Liberation Sans';color:#3b3b3b;transform:scaleX(0.9859);">Manage Workbook Links</div>
<svg class="a" style="left:1894px;top:163px;" width="11" height="11" viewBox="0 0 11 11"><path d="M1 1l9 9M10 1L1 10" stroke="#444" stroke-width="1.1"/></svg>
<div class="a" style="left:2px;top:193px;width:101px;height:26px;background:#ffffff;box-sizing:border-box;border:1px solid #c6c6c6;"></div>
<div class="a t" style="left:8.00px;top:200px;font:400 13px/1 'Liberation Sans';color:#262626;transform:scaleX(0.9225);">G6</div>
<svg class="a" style="left:88px;top:203px;" width="9" height="5" viewBox="0 0 9 5"><path d="M0 0h9L4.5 5z" fill="#666"/></svg>
<div class="a" style="left:117px;top:201px;width:2px;height:2px;background:#9a9a9a;"></div>
<div class="a" style="left:117px;top:205px;width:2px;height:2px;background:#9a9a9a;"></div>
<div class="a" style="left:117px;top:209px;width:2px;height:2px;background:#9a9a9a;"></div>
<div class="a" style="left:133px;top:193px;width:110px;height:26px;background:#fafafa;box-sizing:border-box;border:1px solid #d0d0d0;"></div>
<svg class="a" style="left:145px;top:199px;" width="14" height="14" viewBox="0 0 14 14"><path d="M1.5 1.5l11 11M12.5 1.5l-11 11" stroke="#a6a6a6" stroke-width="1.3"/></svg>
<svg class="a" style="left:181px;top:199px;" width="15" height="14" viewBox="0 0 15 14"><path d="M1.5 7.5l4.5 4.5 8-10" fill="none" stroke="#a6a6a6" stroke-width="1.5"/></svg>
<div class="a t" style="left:218.00px;top:200px;font:italic 400 14px/1 'Liberation Serif';color:#444;transform:scaleX(1.7992);">f</div>
<div class="a t" style="left:224.00px;top:202px;font:italic 400 11px/1 'Liberation Serif';color:#444;transform:scaleX(1.2268);">x</div>
<div class="a" style="left:246px;top:193px;width:1665px;height:26px;background:#fdfdfd;box-sizing:border-box;border:1px solid #c6c6c6;"></div>
<div class="a t" style="left:258.50px;top:199px;font:400 14px/1 'Liberation Sans';color:#262626;transform:scaleX(0.9753);">Vui lòng xóa chứng từ trước khi Chuẩn hóa thông tin</div>
<svg class="a" style="left:1898px;top:203px;" width="9" height="6" viewBox="0 0 9 6"><path d="M0.8 0.8L4.5 4.5 8.2 0.8" fill="none" stroke="#555" stroke-width="1.6"/></svg>
<svg class="a" style="left:10px;top:233px;" width="12" height="12" viewBox="0 0 12 12"><path d="M11 0V11H0z" fill="#b5b5b5"/></svg>
<div class="a" style="left:24px;top:229px;width:1px;height:18px;background:#bdbdbd;"></div>
<div class="a" style="left:77px;top:229px;width:1px;height:18px;background:#bdbdbd;"></div>
<div class="a" style="left:184px;top:229px;width:1px;height:18px;background:#bdbdbd;"></div>
<div class="a" style="left:324px;top:229px;width:1px;height:18px;background:#bdbdbd;"></div>
<div class="a" style="left:464px;top:229px;width:1px;height:18px;background:#bdbdbd;"></div>
<div class="a" style="left:639px;top:229px;width:1px;height:18px;background:#bdbdbd;"></div>
<div class="a" style="left:903px;top:229px;width:1px;height:18px;background:#bdbdbd;"></div>
<div class="a" style="left:1318px;top:229px;width:1px;height:18px;background:#bdbdbd;"></div>
<div class="a" style="left:1448px;top:229px;width:1px;height:18px;background:#bdbdbd;"></div>
<div class="a" style="left:1520px;top:229px;width:1px;height:18px;background:#bdbdbd;"></div>
<div class="a" style="left:1592px;top:229px;width:1px;height:18px;background:#bdbdbd;"></div>
<div class="a" style="left:1664px;top:229px;width:1px;height:18px;background:#bdbdbd;"></div>
<div class="a" style="left:1736px;top:229px;width:1px;height:18px;background:#bdbdbd;"></div>
<div class="a" style="left:1808px;top:229px;width:1px;height:18px;background:#bdbdbd;"></div>
<div class="a" style="left:1880px;top:229px;width:1px;height:18px;background:#bdbdbd;"></div>
<div class="a t" style="left:45.99px;top:231px;font:400 15px/1 'Liberation Sans';color:#000000;">A</div>
<div class="a t" style="left:125.99px;top:231px;font:400 15px/1 'Liberation Sans';color:#000000;">B</div>
<div class="a t" style="left:249.08px;top:231px;font:400 15px/1 'Liberation Sans';color:#000000;">C</div>
<div class="a t" style="left:389.08px;top:231px;font:400 15px/1 'Liberation Sans';color:#000000;">D</div>
<div class="a t" style="left:546.99px;top:231px;font:400 15px/1 'Liberation Sans';color:#000000;">E</div>
<div class="a t" style="left:766.91px;top:231px;font:400 15px/1 'Liberation Sans';color:#000000;">F</div>
<div class="a t" style="left:1105.16px;top:231px;font:400 15px/1 'Liberation Sans';color:#000000;">G</div>
<div class="a t" style="left:1378.08px;top:231px;font:400 15px/1 'Liberation Sans';color:#000000;">H</div>
<div class="a t" style="left:1482.41px;top:231px;font:400 15px/1 'Liberation Sans';color:#000000;">I</div>
<div class="a t" style="left:1552.75px;top:231px;font:400 15px/1 'Liberation Sans';color:#000000;">J</div>
<div class="a t" style="left:1623.49px;top:231px;font:400 15px/1 'Liberation Sans';color:#000000;">K</div>
<div class="a t" style="left:1696.33px;top:231px;font:400 15px/1 'Liberation Sans';color:#000000;">L</div>
<div class="a t" style="left:1766.25px;top:231px;font:400 15px/1 'Liberation Sans';color:#000000;">M</div>
<div class="a t" style="left:1839.08px;top:231px;font:400 15px/1 'Liberation Sans';color:#000000;">N</div>
<div class="a" style="left:2px;top:247px;width:1892px;height:1px;background:#a3a3a3;"></div>
<div class="a" style="left:77px;top:248px;width:1px;height:738px;background:#d4d4d4;"></div>
<div class="a" style="left:184px;top:248px;width:1px;height:738px;background:#d4d4d4;"></div>
<div class="a" style="left:324px;top:248px;width:1px;height:738px;background:#d4d4d4;"></div>
<div class="a" style="left:464px;top:248px;width:1px;height:738px;background:#d4d4d4;"></div>
<div class="a" style="left:639px;top:248px;width:1px;height:738px;background:#d4d4d4;"></div>
<div class="a" style="left:903px;top:248px;width:1px;height:738px;background:#d4d4d4;"></div>
<div class="a" style="left:1318px;top:248px;width:1px;height:738px;background:#d4d4d4;"></div>
<div class="a" style="left:1448px;top:248px;width:1px;height:738px;background:#d4d4d4;"></div>
<div class="a" style="left:1520px;top:248px;width:1px;height:738px;background:#d4d4d4;"></div>
<div class="a" style="left:1592px;top:248px;width:1px;height:738px;background:#d4d4d4;"></div>
<div class="a" style="left:1664px;top:248px;width:1px;height:738px;background:#d4d4d4;"></div>
<div class="a" style="left:1736px;top:248px;width:1px;height:738px;background:#d4d4d4;"></div>
<div class="a" style="left:1808px;top:248px;width:1px;height:738px;background:#d4d4d4;"></div>
<div class="a" style="left:1880px;top:248px;width:1px;height:738px;background:#d4d4d4;"></div>
<div class="a" style="left:1894px;top:247px;width:1px;height:739px;background:#bdbdbd;"></div>
<div class="a" style="left:25px;top:266px;width:1869px;height:1px;background:#d4d4d4;"></div>
<div class="a" style="left:25px;top:290px;width:1869px;height:1px;background:#d4d4d4;"></div>
<div class="a" style="left:25px;top:309px;width:1869px;height:1px;background:#d4d4d4;"></div>
<div class="a" style="left:25px;top:343px;width:1869px;height:1px;background:#d4d4d4;"></div>
<div class="a" style="left:25px;top:385px;width:1869px;height:1px;background:#d4d4d4;"></div>
<div class="a" style="left:25px;top:427px;width:1869px;height:1px;background:#d4d4d4;"></div>
<div class="a" style="left:25px;top:574px;width:1869px;height:1px;background:#d4d4d4;"></div>
<div class="a" style="left:25px;top:721px;width:1869px;height:1px;background:#d4d4d4;"></div>
<div class="a" style="left:25px;top:868px;width:1869px;height:1px;background:#d4d4d4;"></div>
<div class="a" style="left:78px;top:267px;width:1240px;height:23px;background:#ffffff;"></div>
<div class="a" style="left:2px;top:266px;width:22px;height:1px;background:#c3c3c3;"></div>
<div class="a" style="left:2px;top:290px;width:22px;height:1px;background:#c3c3c3;"></div>
<div class="a" style="left:2px;top:309px;width:22px;height:1px;background:#c3c3c3;"></div>
<div class="a" style="left:2px;top:343px;width:22px;height:1px;background:#c3c3c3;"></div>
<div class="a" style="left:2px;top:385px;width:22px;height:1px;background:#c3c3c3;"></div>
<div class="a" style="left:2px;top:427px;width:22px;height:1px;background:#c3c3c3;"></div>
<div class="a" style="left:2px;top:574px;width:22px;height:1px;background:#c3c3c3;"></div>
<div class="a" style="left:2px;top:721px;width:22px;height:1px;background:#c3c3c3;"></div>
<div class="a" style="left:2px;top:868px;width:22px;height:1px;background:#c3c3c3;"></div>
<div class="a" style="left:24px;top:247px;width:1px;height:739px;background:#a9a9a9;"></div>
<div class="a t" style="left:6.33px;top:250px;font:400 15px/1 'Liberation Sans';color:#000000;">1</div>
<div class="a t" style="left:6.33px;top:274px;font:400 15px/1 'Liberation Sans';color:#000000;">2</div>
<div class="a t" style="left:6.33px;top:293px;font:400 15px/1 'Liberation Sans';color:#000000;">3</div>
<div class="a t" style="left:6.33px;top:327px;font:400 15px/1 'Liberation Sans';color:#000000;">4</div>
<div class="a t" style="left:6.33px;top:369px;font:400 15px/1 'Liberation Sans';color:#000000;">5</div>
<div class="a t" style="left:6.33px;top:411px;font:400 15px/1 'Liberation Sans';color:#000000;">6</div>
<div class="a t" style="left:6.33px;top:558px;font:400 15px/1 'Liberation Sans';color:#000000;">7</div>
<div class="a t" style="left:6.33px;top:705px;font:400 15px/1 'Liberation Sans';color:#000000;">8</div>
<div class="a t" style="left:6.33px;top:852px;font:400 15px/1 'Liberation Sans';color:#000000;">9</div>
<div class="a" style="left:25px;top:309px;width:1294px;height:1px;background:#000000;"></div>
<div class="a" style="left:25px;top:343px;width:1294px;height:1px;background:#000000;"></div>
<div class="a" style="left:25px;top:385px;width:1294px;height:1px;background:#000000;"></div>
<div class="a" style="left:25px;top:427px;width:1294px;height:1px;background:#000000;"></div>
<div class="a" style="left:25px;top:574px;width:1294px;height:1px;background:#000000;"></div>
<div class="a" style="left:25px;top:721px;width:1294px;height:1px;background:#000000;"></div>
<div class="a" style="left:25px;top:868px;width:1294px;height:1px;background:#000000;"></div>
<div class="a" style="left:77px;top:309px;width:1px;height:677px;background:#000000;"></div>
<div class="a" style="left:184px;top:309px;width:1px;height:677px;background:#000000;"></div>
<div class="a" style="left:324px;top:309px;width:1px;height:677px;background:#000000;"></div>
<div class="a" style="left:464px;top:309px;width:1px;height:677px;background:#000000;"></div>
<div class="a" style="left:639px;top:309px;width:1px;height:677px;background:#000000;"></div>
<div class="a" style="left:903px;top:309px;width:1px;height:677px;background:#000000;"></div>
<div class="a" style="left:1318px;top:309px;width:1px;height:677px;background:#000000;"></div>
<svg class="a" style="left:25px;top:344px;" width="7" height="7" viewBox="0 0 7 7"><path d="M0 0H6L0 6z" fill="#008000"/></svg>
<svg class="a" style="left:325px;top:344px;" width="7" height="7" viewBox="0 0 7 7"><path d="M0 0H6L0 6z" fill="#008000"/></svg>
<svg class="a" style="left:25px;top:386px;" width="7" height="7" viewBox="0 0 7 7"><path d="M0 0H6L0 6z" fill="#008000"/></svg>
<svg class="a" style="left:325px;top:386px;" width="7" height="7" viewBox="0 0 7 7"><path d="M0 0H6L0 6z" fill="#008000"/></svg>
<svg class="a" style="left:25px;top:428px;" width="7" height="7" viewBox="0 0 7 7"><path d="M0 0H6L0 6z" fill="#008000"/></svg>
<svg class="a" style="left:325px;top:428px;" width="7" height="7" viewBox="0 0 7 7"><path d="M0 0H6L0 6z" fill="#008000"/></svg>
<svg class="a" style="left:25px;top:575px;" width="7" height="7" viewBox="0 0 7 7"><path d="M0 0H6L0 6z" fill="#008000"/></svg>
<svg class="a" style="left:325px;top:575px;" width="7" height="7" viewBox="0 0 7 7"><path d="M0 0H6L0 6z" fill="#008000"/></svg>
<svg class="a" style="left:25px;top:722px;" width="7" height="7" viewBox="0 0 7 7"><path d="M0 0H6L0 6z" fill="#008000"/></svg>
<svg class="a" style="left:325px;top:722px;" width="7" height="7" viewBox="0 0 7 7"><path d="M0 0H6L0 6z" fill="#008000"/></svg>
<svg class="a" style="left:25px;top:869px;" width="7" height="7" viewBox="0 0 7 7"><path d="M0 0H6L0 6z" fill="#008000"/></svg>
<svg class="a" style="left:325px;top:869px;" width="7" height="7" viewBox="0 0 7 7"><path d="M0 0H6L0 6z" fill="#008000"/></svg>
<div class="a t" style="left:447.50px;top:270px;font:700 18px/1 'Liberation Sans';color:#000;transform:scaleX(1.0303);">DANH SÁCH TÀI SẢN CHƯA ĐỦ ĐIỀU KIỆN CHUẨN HÓA</div>
<div class="a t" style="left:37.05px;top:319px;font:700 15px/1 'Liberation Sans';color:#000;transform:scaleX(1.0196);">STT</div>
<div class="a t" style="left:96.60px;top:319px;font:700 15px/1 'Liberation Sans';color:#000;transform:scaleX(0.9623);">Mã tài sản</div>
<div class="a t" style="left:217.10px;top:319px;font:700 15px/1 'Liberation Sans';color:#000;transform:scaleX(0.9673);">Tên tài sản</div>
<div class="a t" style="left:345.45px;top:319px;font:700 15px/1 'Liberation Sans';color:#000;transform:scaleX(0.9664);">Mã loại tài sản</div>
<div class="a t" style="left:513.00px;top:319px;font:700 15px/1 'Liberation Sans';color:#000;transform:scaleX(0.9572);">Loại tài sản</div>
<div class="a t" style="left:688.00px;top:319px;font:700 15px/1 'Liberation Sans';color:#000;transform:scaleX(0.9736);">Lý do chưa đủ điều kiện</div>
<div class="a t" style="left:1071.65px;top:319px;font:700 15px/1 'Liberation Sans';color:#000;transform:scaleX(0.9775);">Hướng dẫn</div>
<div class="a t" style="left:47.08px;top:357px;font:400 16px/1 'Liberation Serif';color:#000;transform:scaleX(0.9800);">1</div>
<div class="a t" style="left:80.00px;top:357px;font:400 16px/1 'Liberation Serif';color:#000;transform:scaleX(0.9881);">NHADAT</div>
<div class="a t" style="left:187.00px;top:357px;font:400 16px/1 'Liberation Serif';color:#000;transform:scaleX(0.9229);">Nhà nghỉ đơn vị</div>
<div class="a t" style="left:327.50px;top:357px;font:400 16px/1 'Liberation Serif';color:#000;transform:scaleX(0.9583);">102</div>
<div class="a t" style="left:467.00px;top:357px;font:400 16px/1 'Liberation Serif';color:#000;transform:scaleX(0.9969);">Cấp I</div>
<div class="a t" style="left:642.00px;top:347px;font:400 16px/1 'Liberation Serif';color:#000;transform:scaleX(0.9265);">Đã phát sinh chứng từ Đánh giá lại</div>
<div class="a t" style="left:642.00px;top:368px;font:400 16px/1 'Liberation Serif';color:#000;transform:scaleX(0.9704);">DGL000107</div>
<div class="a t" style="left:906.00px;top:357px;font:400 16px/1 'Liberation Serif';color:#000;transform:scaleX(0.9305);">Vui lòng xóa chứng từ trước khi Chuẩn hóa thông tin</div>
<div class="a t" style="left:47.08px;top:399px;font:400 16px/1 'Liberation Serif';color:#000;transform:scaleX(0.9800);">2</div>
<div class="a t" style="left:80.00px;top:399px;font:400 16px/1 'Liberation Serif';color:#000;transform:scaleX(0.9697);">XEOTOY</div>
<div class="a t" style="left:187.00px;top:399px;font:400 16px/1 'Liberation Serif';color:#000;transform:scaleX(0.9838);">Xe Toyota</div>
<div class="a t" style="left:327.50px;top:399px;font:400 16px/1 'Liberation Serif';color:#000;transform:scaleX(0.9875);">30102</div>
<div class="a t" style="left:467.00px;top:399px;font:400 16px/1 'Liberation Serif';color:#000;transform:scaleX(0.9705);">Xe 6 đến 8 chỗ</div>
<div class="a t" style="left:642.00px;top:389px;font:400 16px/1 'Liberation Serif';color:#000;transform:scaleX(0.9265);">Đã phát sinh chứng từ Đánh giá lại</div>
<div class="a t" style="left:642.00px;top:410px;font:400 16px/1 'Liberation Serif';color:#000;transform:scaleX(0.9704);">DGL000105</div>
<div class="a t" style="left:906.00px;top:399px;font:400 16px/1 'Liberation Serif';color:#000;transform:scaleX(0.9305);">Vui lòng xóa chứng từ trước khi Chuẩn hóa thông tin</div>
<div class="a t" style="left:47.08px;top:494px;font:400 16px/1 'Liberation Serif';color:#000;transform:scaleX(0.9800);">3</div>
<div class="a t" style="left:80.00px;top:494px;font:400 16px/1 'Liberation Serif';color:#000;transform:scaleX(0.9759);">IN.01</div>
<div class="a t" style="left:187.00px;top:494px;font:400 16px/1 'Liberation Serif';color:#000;transform:scaleX(0.9174);">Máy in</div>
<div class="a t" style="left:327.50px;top:494px;font:400 16px/1 'Liberation Serif';color:#000;transform:scaleX(0.9821);">5020103</div>
<div class="a t" style="left:467.00px;top:494px;font:400 16px/1 'Liberation Serif';color:#000;transform:scaleX(0.9174);">Máy in</div>
<div class="a t" style="left:642.00px;top:462px;font:400 16px/1 'Liberation Serif';color:#000;transform:scaleX(0.9237);">Nguyên giá tài sản không đủ điều kiện.</div>
<div class="a t" style="left:642.00px;top:483px;font:400 16px/1 'Liberation Serif';color:#000;transform:scaleX(0.9471);">Đã phát sinh các chứng từ Hao mòn</div>
<div class="a t" style="left:642.00px;top:504px;font:400 16px/1 'Liberation Serif';color:#000;transform:scaleX(0.9755);">HM000061,Hao mòn HM000060,Kiểm</div>
<div class="a t" style="left:642.00px;top:525px;font:400 16px/1 'Liberation Serif';color:#000;transform:scaleX(0.9912);">kê KK000053,Kiểm kê KK000054</div>
<div class="a t" style="left:906.00px;top:431px;font:400 16px/1 'Liberation Serif';color:#000;transform:scaleX(0.9341);">1. Trường hợp Tài sản cần thay đổi Nguyên giá, vui lòng xóa các</div>
<div class="a t" style="left:906.00px;top:452px;font:400 16px/1 'Liberation Serif';color:#000;transform:scaleX(0.9347);">chứng từ phát sinh trước khi Chuẩn hóa tài sản</div>
<div class="a t" style="left:906.00px;top:473px;font:400 16px/1 'Liberation Serif';color:#000;transform:scaleX(0.9331);">2. Trường hợp Tài sản là tài sản đặc thù trong phạm vi quản lý của</div>
<div class="a t" style="left:906.00px;top:494px;font:400 16px/1 'Liberation Serif';color:#000;transform:scaleX(0.9182);">Bộ/Tỉnh, vui lòng chuyển loại tài sản sang nhóm III - Tài sản cố định</div>
<div class="a t" style="left:906.00px;top:515px;font:400 16px/1 'Liberation Serif';color:#000;transform:scaleX(0.9200);">thuộc phạm vi quản lý của Bộ, Tỉnh</div>
<div class="a t" style="left:906.00px;top:536px;font:400 16px/1 'Liberation Serif';color:#000;transform:scaleX(0.9291);">3. Trường hợp không muốn theo dõi là Tài sản cố định, vui lòng</div>
<div class="a t" style="left:906.00px;top:557px;font:400 16px/1 'Liberation Serif';color:#000;transform:scaleX(0.9215);">chuyển tài sản thành Công cụ dụng cụ.</div>
<div class="a t" style="left:47.08px;top:641px;font:400 16px/1 'Liberation Serif';color:#000;transform:scaleX(0.9800);">4</div>
<div class="a t" style="left:80.00px;top:641px;font:400 16px/1 'Liberation Serif';color:#000;transform:scaleX(0.9800);">IN.02</div>
<div class="a t" style="left:187.00px;top:641px;font:400 16px/1 'Liberation Serif';color:#000;transform:scaleX(0.9174);">Máy in</div>
<div class="a t" style="left:327.50px;top:641px;font:400 16px/1 'Liberation Serif';color:#000;transform:scaleX(0.9821);">5020103</div>
<div class="a t" style="left:467.00px;top:641px;font:400 16px/1 'Liberation Serif';color:#000;transform:scaleX(0.9174);">Máy in</div>
<div class="a t" style="left:642.00px;top:609px;font:400 16px/1 'Liberation Serif';color:#000;transform:scaleX(0.9237);">Nguyên giá tài sản không đủ điều kiện.</div>
<div class="a t" style="left:642.00px;top:630px;font:400 16px/1 'Liberation Serif';color:#000;transform:scaleX(0.9503);">Đã phát sinh các chứng từ Kiểm kê</div>
<div class="a t" style="left:642.00px;top:651px;font:400 16px/1 'Liberation Serif';color:#000;transform:scaleX(0.9914);">KK000054,Kiểm kê KK000053,Hao</div>
<div class="a t" style="left:642.00px;top:672px;font:400 16px/1 'Liberation Serif';color:#000;transform:scaleX(0.9652);">mòn HM000060,Hao mòn HM000061</div>
<div class="a t" style="left:906.00px;top:578px;font:400 16px/1 'Liberation Serif';color:#000;transform:scaleX(0.9341);">1. Trường hợp Tài sản cần thay đổi Nguyên giá, vui lòng xóa các</div>
<div class="a t" style="left:906.00px;top:599px;font:400 16px/1 'Liberation Serif';color:#000;transform:scaleX(0.9347);">chứng từ phát sinh trước khi Chuẩn hóa tài sản</div>
<div class="a t" style="left:906.00px;top:620px;font:400 16px/1 'Liberation Serif';color:#000;transform:scaleX(0.9331);">2. Trường hợp Tài sản là tài sản đặc thù trong phạm vi quản lý của</div>
<div class="a t" style="left:906.00px;top:641px;font:400 16px/1 'Liberation Serif';color:#000;transform:scaleX(0.9182);">Bộ/Tỉnh, vui lòng chuyển loại tài sản sang nhóm III - Tài sản cố định</div>
<div class="a t" style="left:906.00px;top:662px;font:400 16px/1 'Liberation Serif';color:#000;transform:scaleX(0.9200);">thuộc phạm vi quản lý của Bộ, Tỉnh</div>
<div class="a t" style="left:906.00px;top:683px;font:400 16px/1 'Liberation Serif';color:#000;transform:scaleX(0.9291);">3. Trường hợp không muốn theo dõi là Tài sản cố định, vui lòng</div>
<div class="a t" style="left:906.00px;top:704px;font:400 16px/1 'Liberation Serif';color:#000;transform:scaleX(0.9215);">chuyển tài sản thành Công cụ dụng cụ.</div>
<div class="a t" style="left:47.08px;top:788px;font:400 16px/1 'Liberation Serif';color:#000;transform:scaleX(0.9800);">5</div>
<div class="a t" style="left:80.00px;top:788px;font:400 16px/1 'Liberation Serif';color:#000;transform:scaleX(0.9800);">IN.03</div>
<div class="a t" style="left:187.00px;top:788px;font:400 16px/1 'Liberation Serif';color:#000;transform:scaleX(0.9174);">Máy in</div>
<div class="a t" style="left:327.50px;top:788px;font:400 16px/1 'Liberation Serif';color:#000;transform:scaleX(0.9821);">5020103</div>
<div class="a t" style="left:467.00px;top:788px;font:400 16px/1 'Liberation Serif';color:#000;transform:scaleX(0.9174);">Máy in</div>
<div class="a t" style="left:642.00px;top:756px;font:400 16px/1 'Liberation Serif';color:#000;transform:scaleX(0.9237);">Nguyên giá tài sản không đủ điều kiện.</div>
<div class="a t" style="left:642.00px;top:777px;font:400 16px/1 'Liberation Serif';color:#000;transform:scaleX(0.9471);">Đã phát sinh các chứng từ Hao mòn</div>
<div class="a t" style="left:642.00px;top:798px;font:400 16px/1 'Liberation Serif';color:#000;transform:scaleX(0.9845);">HM000061,Kiểm kê KK000054,Hao</div>
<div class="a t" style="left:642.00px;top:819px;font:400 16px/1 'Liberation Serif';color:#000;transform:scaleX(0.9751);">mòn HM000060,Kiểm kê KK000053</div>
<div class="a t" style="left:906.00px;top:725px;font:400 16px/1 'Liberation Serif';color:#000;transform:scaleX(0.9341);">1. Trường hợp Tài sản cần thay đổi Nguyên giá, vui lòng xóa các</div>
<div class="a t" style="left:906.00px;top:746px;font:400 16px/1 'Liberation Serif';color:#000;transform:scaleX(0.9347);">chứng từ phát sinh trước khi Chuẩn hóa tài sản</div>
<div class="a t" style="left:906.00px;top:767px;font:400 16px/1 'Liberation Serif';color:#000;transform:scaleX(0.9331);">2. Trường hợp Tài sản là tài sản đặc thù trong phạm vi quản lý của</div>
<div class="a t" style="left:906.00px;top:788px;font:400 16px/1 'Liberation Serif';color:#000;transform:scaleX(0.9182);">Bộ/Tỉnh, vui lòng chuyển loại tài sản sang nhóm III - Tài sản cố định</div>
<div class="a t" style="left:906.00px;top:809px;font:400 16px/1 'Liberation Serif';color:#000;transform:scaleX(0.9200);">thuộc phạm vi quản lý của Bộ, Tỉnh</div>
<div class="a t" style="left:906.00px;top:830px;font:400 16px/1 'Liberation Serif';color:#000;transform:scaleX(0.9291);">3. Trường hợp không muốn theo dõi là Tài sản cố định, vui lòng</div>
<div class="a t" style="left:906.00px;top:851px;font:400 16px/1 'Liberation Serif';color:#000;transform:scaleX(0.9215);">chuyển tài sản thành Công cụ dụng cụ.</div>
<div class="a t" style="left:47.08px;top:935px;font:400 16px/1 'Liberation Serif';color:#000;transform:scaleX(0.9800);">6</div>
<div class="a t" style="left:80.00px;top:935px;font:400 16px/1 'Liberation Serif';color:#000;transform:scaleX(0.9783);">TSCD033</div>
<div class="a t" style="left:187.00px;top:935px;font:400 16px/1 'Liberation Serif';color:#000;transform:scaleX(0.8938);">Kính hiển vi</div>
<div class="a t" style="left:327.50px;top:935px;font:400 16px/1 'Liberation Serif';color:#000;transform:scaleX(0.9800);">7</div>
<div class="a t" style="left:467.00px;top:924px;font:400 16px/1 'Liberation Serif';color:#000;transform:scaleX(0.9196);">Tài sản cố định hữu hình</div>
<div class="a t" style="left:467.00px;top:945px;font:400 16px/1 'Liberation Serif';color:#000;transform:scaleX(0.9767);">khác</div>
<div class="a t" style="left:642.00px;top:903px;font:400 16px/1 'Liberation Serif';color:#000;transform:scaleX(0.9237);">Nguyên giá tài sản không đủ điều kiện.</div>
<div class="a t" style="left:642.00px;top:924px;font:400 16px/1 'Liberation Serif';color:#000;transform:scaleX(0.9503);">Đã phát sinh các chứng từ Kiểm kê</div>
<div class="a t" style="left:642.00px;top:945px;font:400 16px/1 'Liberation Serif';color:#000;transform:scaleX(0.9914);">KK000053,Kiểm kê KK000054,Hao</div>
<div class="a t" style="left:642.00px;top:966px;font:400 16px/1 'Liberation Serif';color:#000;transform:scaleX(0.9652);">mòn HM000060,Hao mòn HM000061</div>
<div class="a t" style="left:906.00px;top:872px;font:400 16px/1 'Liberation Serif';color:#000;transform:scaleX(0.9341);">1. Trường hợp Tài sản cần thay đổi Nguyên giá, vui lòng xóa các</div>
<div class="a t" style="left:906.00px;top:893px;font:400 16px/1 'Liberation Serif';color:#000;transform:scaleX(0.9347);">chứng từ phát sinh trước khi Chuẩn hóa tài sản</div>
<div class="a t" style="left:906.00px;top:914px;font:400 16px/1 'Liberation Serif';color:#000;transform:scaleX(0.9331);">2. Trường hợp Tài sản là tài sản đặc thù trong phạm vi quản lý của</div>
<div class="a t" style="left:906.00px;top:935px;font:400 16px/1 'Liberation Serif';color:#000;transform:scaleX(0.9182);">Bộ/Tỉnh, vui lòng chuyển loại tài sản sang nhóm III - Tài sản cố định</div>
<div class="a t" style="left:906.00px;top:956px;font:400 16px/1 'Liberation Serif';color:#000;transform:scaleX(0.9200);">thuộc phạm vi quản lý của Bộ, Tỉnh</div>
<div class="a t" style="left:906.00px;top:977px;font:400 16px/1 'Liberation Serif';color:#000;transform:scaleX(0.9291);">3. Trường hợp không muốn theo dõi là Tài sản cố định, vui lòng</div>
<div class="a t" style="left:906.00px;top:998px;font:400 16px/1 'Liberation Serif';color:#000;transform:scaleX(0.9215);">chuyển tài sản thành Công cụ dụng cụ.</div>
<div class="a" style="left:1894px;top:229px;width:18px;height:757px;background:#e6e6e6;"></div>
<div class="a" style="left:1898px;top:231px;width:14px;height:755px;background:#f0f0f0;"></div>
<div class="a" style="left:1898px;top:231px;width:14px;height:15px;background:#ffffff;box-sizing:border-box;border:1px solid #ababab;"></div>
<svg class="a" style="left:1901px;top:236px;" width="8" height="5" viewBox="0 0 8 5"><path d="M0 5L4 0 8 5z" fill="#222"/></svg>
<div class="a" style="left:1898px;top:246px;width:14px;height:69px;background:#ffffff;box-sizing:border-box;border:1px solid #ababab;"></div>
<div class="a" style="left:1898px;top:972px;width:14px;height:15px;background:#ffffff;box-sizing:border-box;border:1px solid #ababab;"></div>
<svg class="a" style="left:1902px;top:978px;" width="8" height="5" viewBox="0 0 8 5"><path d="M0 0h8L4 5z" fill="#222"/></svg>
<div class="a" style="left:2px;top:986px;width:1910px;height:28px;background:#e6e6e6;"></div>
<div class="a" style="left:2px;top:986px;width:1892px;height:1px;background:#9f9f9f;"></div>
<div class="a" style="left:2px;top:1014px;width:1910px;height:1px;background:#c8c8c8;"></div>
<svg class="a" style="left:23px;top:996px;" width="5" height="7" viewBox="0 0 5 7"><path d="M4.5 0V7L0 3.5z" fill="#c2c2c2"/></svg>
<svg class="a" style="left:52px;top:996px;" width="5" height="7" viewBox="0 0 5 7"><path d="M0 0V7L4.5 3.5z" fill="#c2c2c2"/></svg>
<div class="a" style="left:96px;top:986px;width:51px;height:25px;background:#ffffff;"></div>
<div class="a" style="left:96px;top:986px;width:1px;height:25px;background:#9f9f9f;"></div>
<div class="a" style="left:146px;top:986px;width:1px;height:25px;background:#9f9f9f;"></div>
<div class="a" style="left:96px;top:1009px;width:51px;height:2px;background:#217346;"></div>
<div class="a t" style="left:109.00px;top:992px;font:700 13px/1 'Liberation Sans';color:#217346;">Mẫu</div>
<svg class="a" style="left:180px;top:992px;" width="17" height="17" viewBox="0 0 17 17"><circle cx="8.5" cy="8.5" r="7.6" fill="none" stroke="#7a7a7a" stroke-width="1.2"/><path d="M8.5 4.3v8.4M4.3 8.5h8.4" stroke="#6a6a6a" stroke-width="2"/></svg>
<div class="a" style="left:1148px;top:995px;width:2px;height:2px;background:#a0a0a0;"></div>
<div class="a" style="left:1148px;top:999px;width:2px;height:2px;background:#a0a0a0;"></div>
<div class="a" style="left:1148px;top:1003px;width:2px;height:2px;background:#a0a0a0;"></div>
<div class="a" style="left:1165px;top:993px;width:15px;height:15px;background:#ffffff;box-sizing:border-box;border:1px solid #ababab;"></div>
<svg class="a" style="left:1170px;top:997px;" width="5" height="8" viewBox="0 0 5 8"><path d="M5 0V8L0 4z" fill="#222"/></svg>
<div class="a" style="left:1179px;top:993px;width:651px;height:15px;background:#ffffff;box-sizing:border-box;border:1px solid #ababab;"></div>
<div class="a" style="left:1830px;top:993px;width:50px;height:15px;background:#f0f0f0;"></div>
<div class="a" style="left:1880px;top:993px;width:15px;height:15px;background:#ffffff;box-sizing:border-box;border:1px solid #ababab;"></div>
<svg class="a" style="left:1886px;top:997px;" width="5" height="8" viewBox="0 0 5 8"><path d="M0 0V8L5 4z" fill="#222"/></svg>
<div class="a" style="left:2px;top:1015px;width:1910px;height:20px;background:#f3f3f3;"></div>
<div class="a t" style="left:7.50px;top:1020px;font:400 12px/1 'Liberation Sans';color:#444;transform:scaleX(0.8649);">Ready</div>
<svg class="a" style="left:56px;top:1016px;" width="18" height="18" viewBox="0 0 18 18"><path d="M5 4.2A6.3 6.3 0 0 0 7 14.7" fill="none" stroke="#555" stroke-width="1.2" stroke-dasharray="2 1.3"/><path d="M7.3 2.4v7M5.3 7.2l2 2.2 2-2.2" fill="none" stroke="#555" stroke-width="1.1"/><path d="M10.5 5.3l3 1.8-3 1.8" fill="none" stroke="#555" stroke-width="1.1"/><path d="M9.2 12.3l2.6 3.2 4.8-5.8" fill="none" stroke="#555" stroke-width="1.6"/></svg>
<div class="a t" style="left:76.50px;top:1019px;font:400 12px/1 'Liberation Sans';color:#444;transform:scaleX(0.9589);">Accessibility: Good to go</div>
<div class="a" style="left:1616px;top:1015px;width:40px;height:20px;background:#c6c6c6;"></div>
<svg class="a" style="left:1629px;top:1018px;" width="13" height="13" viewBox="0 0 13 13"><path d="M0.6 0.6h11.8v11.8H0.6zM0.6 4.6h11.8M0.6 8.4h11.8M4.6 0.6v11.8M8.4 0.6v11.8" fill="none" stroke="#6b6b6b" stroke-width="1.2"/></svg>
<svg class="a" style="left:1669px;top:1018px;" width="14" height="13" viewBox="0 0 14 13"><rect x="0.6" y="0.6" width="12.8" height="11.8" fill="none" stroke="#6b6b6b" stroke-width="1.2"/><rect x="3.6" y="2.4" width="6.6" height="8" fill="none" stroke="#6b6b6b" stroke-width="1.1"/><path d="M4.8 4.4h4.2M4.8 6.4h4.2M4.8 8.4h4.2" stroke="#6b6b6b" stroke-width="0.9"/></svg>
<svg class="a" style="left:1709px;top:1018px;" width="14" height="13" viewBox="0 0 14 13"><rect x="0.6" y="0.6" width="12.8" height="11.8" fill="none" stroke="#6b6b6b" stroke-width="1.2"/><path d="M1 7.2h7.5V0.6M4.6 0.6v6.6" fill="none" stroke="#6b6b6b" stroke-width="1.1"/></svg>
<div class="a" style="left:1742px;top:1024px;width:8px;height:1px;background:#444;"></div>
<div class="a" style="left:1755px;top:1025px;width:100px;height:1px;background:#444;"></div>
<div class="a" style="left:1803px;top:1020px;width:5px;height:11px;background:#444;"></div>
<div class="a" style="left:1860px;top:1024px;width:8px;height:1px;background:#444;"></div>
<div class="a" style="left:1864px;top:1020px;width:1px;height:9px;background:#444;"></div>
<div class="a t" style="left:1881.00px;top:1019px;font:400 12px/1 'Liberation Sans';color:#444;transform:scaleX(0.8631);">100%</div>
<div class="a" style="left:633px;top:298px;width:259px;height:684px;box-sizing:border-box;border:4px solid #e0181b;"></div>
<div class="a" style="left:888px;top:297px;width:438px;height:693px;box-sizing:border-box;border:4px solid #e0181b;"></div>
</body></html>
